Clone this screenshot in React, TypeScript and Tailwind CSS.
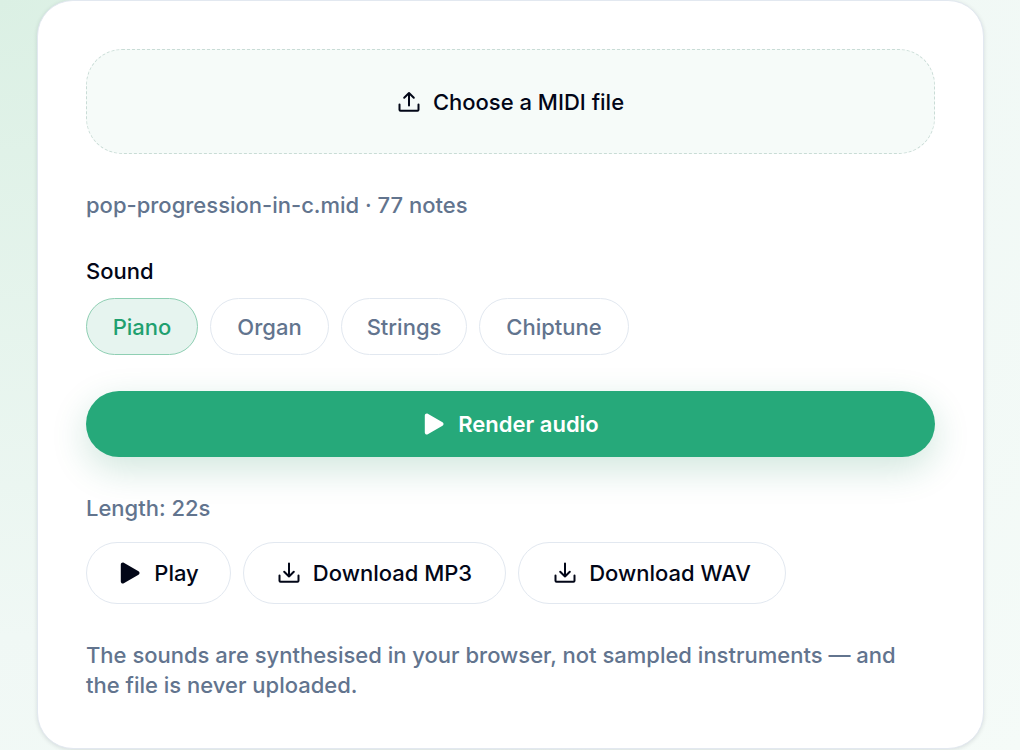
import React, { useState } from 'react';

type IconProps = { className?: string };

const UploadIcon: React.FC<IconProps> = ({ className }) => (
  <svg viewBox="0 0 24 24" className={className} fill="none" stroke="currentColor" strokeWidth="2" strokeLinecap="round" strokeLinejoin="round" aria-hidden="true">
    <path d="M2.5 14.5v5.2a1 1 0 0 0 1 1h17a1 1 0 0 0 1-1v-5.2" />
    <path d="M12 15.5V3M7.2 7.8 12 3l4.8 4.8" />
  </svg>
);

const DownloadIcon: React.FC<IconProps> = ({ className }) => (
  <svg viewBox="0 0 24 24" className={className} fill="none" stroke="currentColor" strokeWidth="2" strokeLinecap="round" strokeLinejoin="round" aria-hidden="true">
    <path d="M2.5 14.5v5.2a1 1 0 0 0 1 1h17a1 1 0 0 0 1-1v-5.2" />
    <path d="M12 2.5v13M7.2 10.7l4.8 4.8 4.8-4.8" />
  </svg>
);

const PlayIcon: React.FC<IconProps> = ({ className }) => (
  <svg viewBox="0 0 24 24" className={className} fill="currentColor" aria-hidden="true">
    <path d="M2.8 3.6v16.8c0 1.6 1.6 2.5 3 1.8l14.7-8.4c1.4-.8 1.4-2.8 0-3.6L5.8 1.8c-1.4-.7-3 .2-3 1.8z" />
  </svg>
);

const SOUNDS = [
  { name: 'Piano', width: 'min-w-[112px]' },
  { name: 'Organ', width: 'min-w-[119px]' },
  { name: 'Strings', width: 'min-w-[126px]' },
  { name: 'Chiptune', width: 'min-w-[150px]' },
];

const ACTIONS = [
  { label: 'Play', Icon: PlayIcon, width: 'min-w-[145px]' },
  { label: 'Download MP3', Icon: DownloadIcon, width: 'min-w-[263px]' },
  { label: 'Download WAV', Icon: DownloadIcon, width: 'min-w-[268px]' },
];

export default function App() {
  const [sound, setSound] = useState('Piano');

  return (
    <div className="min-h-screen bg-[radial-gradient(ellipse_at_top_left,#dbf0e4_0%,#f0f8f5_60%,#f5fbf8_100%)] pl-[37px] pr-9 font-['Inter',sans-serif] text-[22px] leading-[30px] font-medium text-[#020617]">
      <main className="rounded-[36px] border border-slate-200 bg-white p-12 shadow-[0_1px_4px_rgba(15,23,42,0.12)]">
        <button type="button" className="flex h-[105px] w-full items-center justify-center gap-3 rounded-[36px] border border-dashed border-[#c9dcd6] bg-[#f6fbf9]">
          <UploadIcon className="size-6" />
          Choose a MIDI file
        </button>

        <p className="mt-9 text-slate-500">pop-progression-in-c.mid · 77 notes</p>

        <h2 className="mt-9">Sound</h2>
        <div className="mt-3 flex flex-wrap gap-3">
          {SOUNDS.map(({ name, width }) => (
            <button
              key={name}
              type="button"
              aria-pressed={sound === name}
              onClick={() => setSound(name)}
              className={`h-[57px] rounded-full border px-5 ${width} ${sound === name ? 'border-[#8fcfb3] bg-[#e6f4ef] text-[#1fa06f]' : 'border-slate-200 bg-white text-slate-500'}`}
            >
              {name}
            </button>
          ))}
        </div>

        <button type="button" className="mt-9 flex h-[66px] w-full items-center justify-center gap-3 rounded-full bg-[#26a97a] font-semibold text-white shadow-[0_12px_36px_rgba(21,128,84,0.2)]">
          <PlayIcon className="size-6" />
          Render audio
        </button>

        <p className="mt-9 text-slate-500">Length: 22s</p>
        <div className="mt-[19px] flex flex-wrap gap-3">
          {ACTIONS.map(({ label, Icon, width }) => (
            <button key={label} type="button" className={`flex h-[62px] items-center justify-center gap-3 rounded-full border border-slate-200 bg-white px-7 ${width}`}>
              <Icon className="size-6" />
              {label}
            </button>
          ))}
        </div>

        <p className="mt-9 text-slate-500">
          The sounds are synthesised in your browser, not sampled instruments — and the file is never uploaded.
        </p>
      </main>
    </div>
  );
}
